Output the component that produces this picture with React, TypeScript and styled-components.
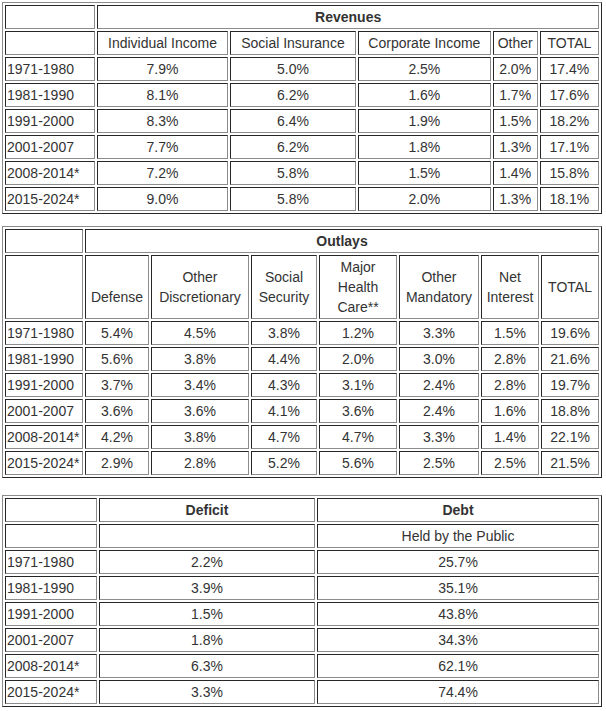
import React from 'react';
import styled, { createGlobalStyle } from 'styled-components';

const GlobalStyle = createGlobalStyle`
  html, body {
    margin: 0;
    padding: 0;
    background: #ffffff;
  }
  body {
    padding: 2px 0 0 2px;
    font-family: 'Liberation Sans', Arial, sans-serif;
    font-size: 14px;
    color: #333333;
  }
`;

// Styled components
const DataTable = styled.table<{ $gap?: number }>`
  width: 600px;
  table-layout: fixed;
  border-collapse: separate;
  border-spacing: 2px;
  border-style: solid;
  border-width: 1px;
  border-color: #8c8c8c #262626 #262626 #8c8c8c;
  margin-top: ${(p) => p.$gap || 0}px;
`;

const Col = styled.col<{ $w: number }>`
  width: ${(p) => p.$w}px;
`;

const Cell = styled.td<{ $left?: boolean; $bold?: boolean }>`
  box-sizing: border-box;
  padding: 1px;
  line-height: 20px;
  font-size: 14px;
  border-style: solid;
  border-width: 1px;
  border-color: #262626 #8c8c8c #8c8c8c #262626;
  text-align: ${(p) => (p.$left ? 'left' : 'center')};
  font-weight: ${(p) => (p.$bold ? 'bold' : 'normal')};
  vertical-align: middle;
  white-space: nowrap;
  color: #333333;
`;

const periods = ['1971-1980', '1981-1990', '1991-2000', '2001-2007', '2008-2014*', '2015-2024*'];

const revenues = [
  ['7.9%', '5.0%', '2.5%', '2.0%', '17.4%'],
  ['8.1%', '6.2%', '1.6%', '1.7%', '17.6%'],
  ['8.3%', '6.4%', '1.9%', '1.5%', '18.2%'],
  ['7.7%', '6.2%', '1.8%', '1.3%', '17.1%'],
  ['7.2%', '5.8%', '1.5%', '1.4%', '15.8%'],
  ['9.0%', '5.8%', '2.0%', '1.3%', '18.1%'],
];

const outlays = [
  ['5.4%', '4.5%', '3.8%', '1.2%', '3.3%', '1.5%', '19.6%'],
  ['5.6%', '3.8%', '4.4%', '2.0%', '3.0%', '2.8%', '21.6%'],
  ['3.7%', '3.4%', '4.3%', '3.1%', '2.4%', '2.8%', '19.7%'],
  ['3.6%', '3.6%', '4.1%', '3.6%', '2.4%', '1.6%', '18.8%'],
  ['4.2%', '3.8%', '4.7%', '4.7%', '3.3%', '1.4%', '22.1%'],
  ['2.9%', '2.8%', '5.2%', '5.6%', '2.5%', '2.5%', '21.5%'],
];

const deficitDebt = [
  ['2.2%', '25.7%'],
  ['3.9%', '35.1%'],
  ['1.5%', '43.8%'],
  ['1.8%', '34.3%'],
  ['6.3%', '62.1%'],
  ['3.3%', '74.4%'],
];

const DataRows: React.FC<{ rows: string[][] }> = ({ rows }) => (
  <>
    {rows.map((row, i) => (
      <tr key={periods[i]}>
        <Cell $left>{periods[i]}</Cell>
        {row.map((v, j) => (
          <Cell key={j}>{v}</Cell>
        ))}
      </tr>
    ))}
  </>
);

const App: React.FC = () => (
  <>
    <GlobalStyle />
    <DataTable>
      <colgroup>
        {[90, 130, 126, 132, 45, 59].map((w, i) => (
          <Col key={i} $w={w} />
        ))}
      </colgroup>
      <tbody>
        <tr>
          <Cell>&nbsp;</Cell>
          <Cell colSpan={5} $bold>Revenues</Cell>
        </tr>
        <tr>
          <Cell>&nbsp;</Cell>
          <Cell>Individual Income</Cell>
          <Cell>Social Insurance</Cell>
          <Cell>Corporate Income</Cell>
          <Cell>Other</Cell>
          <Cell>TOTAL</Cell>
        </tr>
        <DataRows rows={revenues} />
      </tbody>
    </DataTable>

    <DataTable $gap={12}>
      <colgroup>
        {[78, 64, 98, 66, 78, 80, 58, 58].map((w, i) => (
          <Col key={i} $w={w} />
        ))}
      </colgroup>
      <tbody>
        <tr>
          <Cell>&nbsp;</Cell>
          <Cell colSpan={7} $bold>Outlays</Cell>
        </tr>
        <tr>
          <Cell>&nbsp;</Cell>
          <Cell>&nbsp;<br />Defense</Cell>
          <Cell>Other<br />Discretionary</Cell>
          <Cell>Social<br />Security</Cell>
          <Cell>Major<br />Health<br />Care**</Cell>
          <Cell>Other<br />Mandatory</Cell>
          <Cell>Net<br />Interest</Cell>
          <Cell>TOTAL</Cell>
        </tr>
        <DataRows rows={outlays} />
      </tbody>
    </DataTable>

    <DataTable $gap={17}>
      <colgroup>
        {[92, 216, 282].map((w, i) => (
          <Col key={i} $w={w} />
        ))}
      </colgroup>
      <tbody>
        <tr>
          <Cell>&nbsp;</Cell>
          <Cell $bold>Deficit</Cell>
          <Cell $bold>Debt</Cell>
        </tr>
        <tr>
          <Cell>&nbsp;</Cell>
          <Cell>&nbsp;</Cell>
          <Cell>Held by the Public</Cell>
        </tr>
        <DataRows rows={deficitDebt} />
      </tbody>
    </DataTable>
  </>
);

export default App;
